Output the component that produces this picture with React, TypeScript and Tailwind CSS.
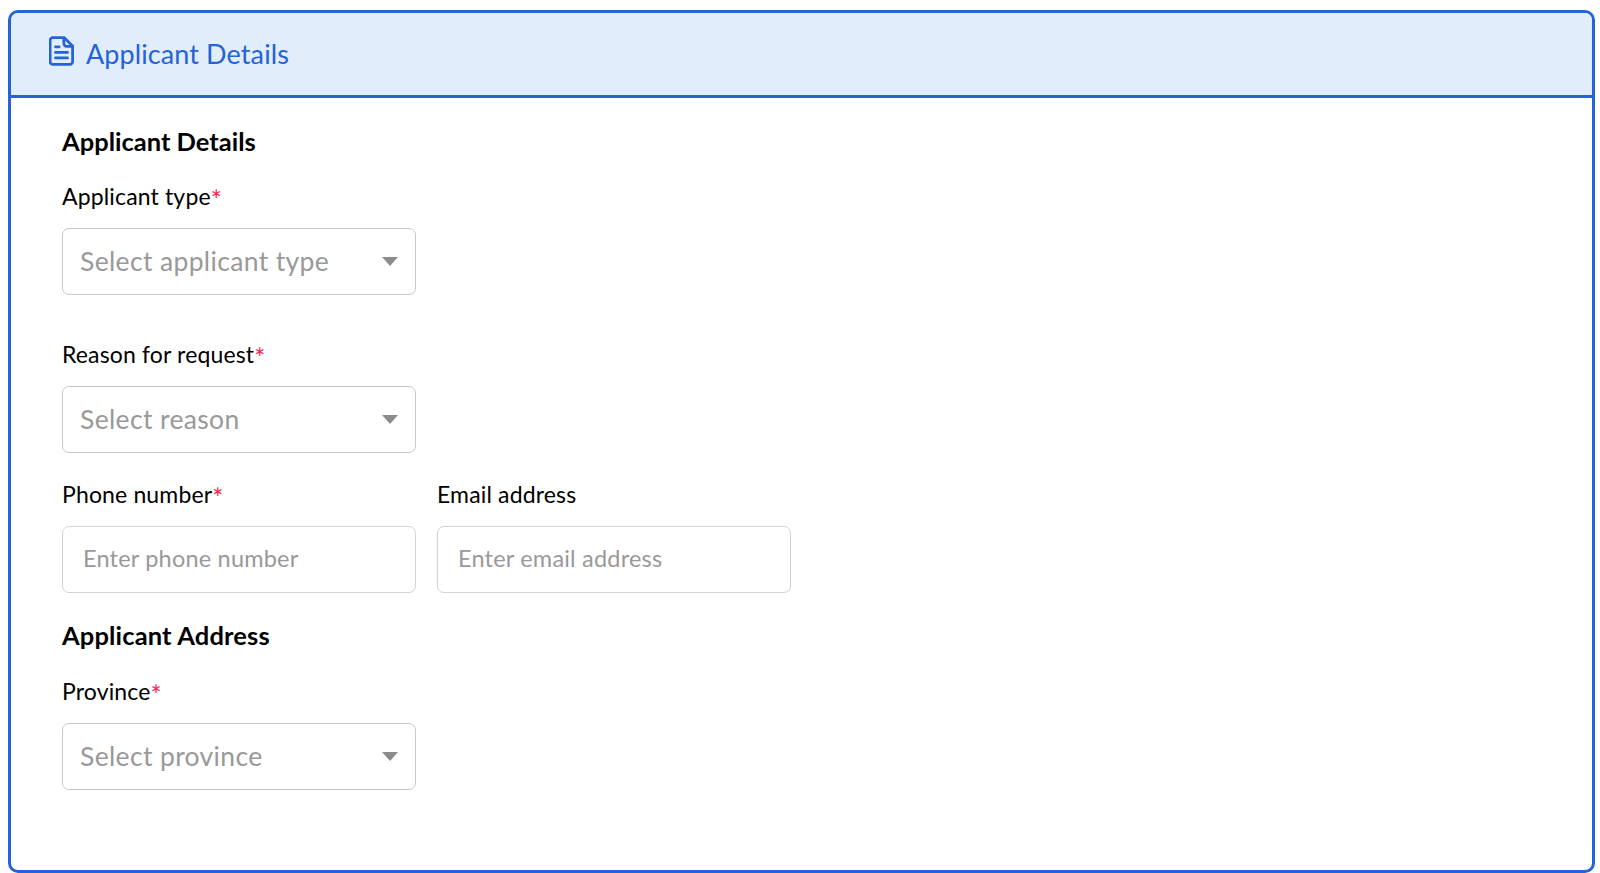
const FONT = "font-['Lato','Noto_Sans',sans-serif]"

function Label({ text, required }: { text: string; required?: boolean }) {
  return (
    <label className="block h-[24px] text-[23px] leading-[24px] tracking-[0.15px] text-black">
      {text}
      {required && <span className="align-[-5px] text-[26px] leading-[20px] text-[#f5224d]">*</span>}
    </label>
  )
}

function SelectBox({ placeholder }: { placeholder: string }) {
  return (
    <div className="flex h-[67px] w-[354px] items-center justify-between rounded-[7px] border border-[#c9c9c9] bg-white pl-[17px] pr-[17px]">
      <span className="text-[26.5px] tracking-[0.35px] text-[#999999]">{placeholder}</span>
      <svg width="16" height="9" viewBox="0 0 16 9">
        <path d="M0 0h16L8 9z" fill="#8c8c8c" />
      </svg>
    </div>
  )
}

function TextBox({ placeholder }: { placeholder: string }) {
  return (
    <input
      placeholder={placeholder}
      className="h-[67px] w-[354px] rounded-[7px] border border-[#d2d2d8] bg-white px-[20px] pb-[3px] text-[23.5px] tracking-[0.2px] outline-none placeholder:text-[#999999]"
    />
  )
}

export default function App() {
  return (
    <main className={`h-[873px] w-[1600px] bg-white pl-[8px] pr-[5px] pt-[10px] ${FONT}`}>
      <section className="h-[863px] overflow-hidden rounded-[10px] border-[3px] border-[#2563d6] bg-white">
        <header className="flex h-[85px] items-center gap-[12px] border-b-[3px] border-[#2563d6] bg-[#e1edfa] pb-[6px] pl-[38px]">
          <svg width="25" height="30" viewBox="0 0 27 32" fill="none" stroke="#2563d6" strokeWidth="3" strokeLinejoin="round" strokeLinecap="round">
            <path d="M4.2 1.5h12l9.3 9v17a3 3 0 0 1-3 3H4.2a3 3 0 0 1-3-3v-23a3 3 0 0 1 3-3z" />
            <path d="M16 2v6a3 3 0 0 0 3 3h6" />
            <path d="M7 11.5h4M7 17.5h13M7 23.5h13" />
          </svg>
          <h1 className="pt-[6px] text-[27px] tracking-[0.1px] text-[#2563d6]">Applicant Details</h1>
        </header>
        <div className="flex flex-col pl-[51px] pt-[29px]">
          <h2 className="h-[28px] text-[25.5px] font-bold leading-[28px] text-black">Applicant Details</h2>
          <div className="mt-[29px] flex flex-col gap-[20px]">
            <Label text="Applicant type" required />
            <SelectBox placeholder="Select applicant type" />
          </div>
          <div className="mt-[47px] flex flex-col gap-[20px]">
            <Label text="Reason for request" required />
            <SelectBox placeholder="Select reason" />
          </div>
          <div className="mt-[29px] flex gap-[21px]">
            <div className="flex flex-col gap-[20px]">
              <Label text="Phone number" required />
              <TextBox placeholder="Enter phone number" />
            </div>
            <div className="flex flex-col gap-[20px]">
              <Label text="Email address" />
              <TextBox placeholder="Enter email address" />
            </div>
          </div>
          <h2 className="mt-[28px] h-[28px] text-[25.5px] font-bold leading-[28px] tracking-[0.15px] text-black">Applicant Address</h2>
          <div className="mt-[30px] flex flex-col gap-[20px]">
            <Label text="Province" required />
            <SelectBox placeholder="Select province" />
          </div>
        </div>
      </section>
    </main>
  )
}
